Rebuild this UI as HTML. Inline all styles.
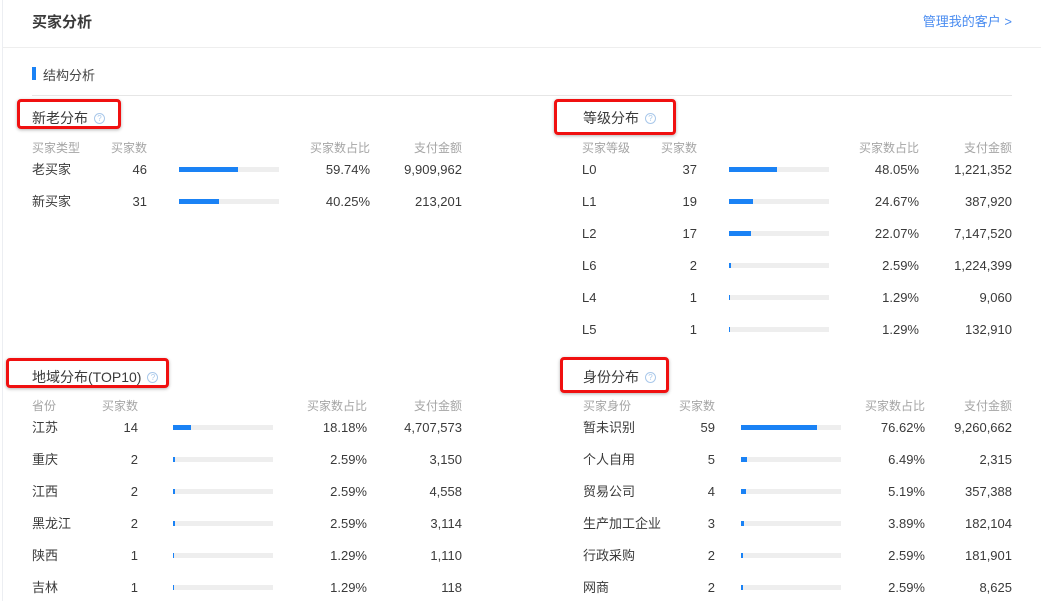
<!DOCTYPE html>
<html><head><meta charset="utf-8"><style>
body{margin:0;width:1041px;height:601px;overflow:hidden;background:#fff;font-family:"Liberation Sans","Noto Sans CJK SC",sans-serif;position:relative;color:#3a3a3a}
.a{position:absolute;white-space:nowrap;line-height:20px;height:20px;font-size:13px;transform:translateY(1px)}
.h{color:#a5a5a5;font-size:12px}
.bar{position:absolute;height:5px;width:100px;background:#eee}
.bar i{display:block;height:5px;background:#1a82f5}
.red{position:absolute;border:3px solid #f01010;border-radius:4px;box-shadow:0 1px 3px rgba(0,0,0,.3)}
.q{display:inline-block;width:9px;height:9px;border:1px solid #a9c8ea;border-radius:50%;color:#a9c8ea;font-size:8px;line-height:9px;text-align:center;vertical-align:2px;margin-left:6px}
</style></head><body>
<div style="position:absolute;left:2px;top:0;width:1px;height:601px;background:#eceef2"></div>
<div class="a" style="left:32px;top:12px;font-size:15px;font-weight:bold">买家分析</div>
<div class="a" style="right:29px;top:11px;color:#4a8cf0;font-size:13px">管理我的客户 &gt;</div>
<div style="position:absolute;left:3px;right:0;top:47px;height:1px;background:#eee"></div>
<div style="position:absolute;left:32px;top:67px;width:4px;height:13px;background:#1a82f5"></div>
<div class="a" style="left:43px;top:65px;color:#444">结构分析</div>
<div style="position:absolute;left:32px;width:980px;top:95px;height:1px;background:#e6e6e6"></div>

<div class="red" style="left:17px;top:99px;width:98px;height:24px"></div>
<div class="a" style="left:32px;top:107px;font-size:14px">新老分布<span class="q">?</span></div>
<div class="red" style="left:554px;top:99px;width:116px;height:30px"></div>
<div class="a" style="left:583px;top:107px;font-size:14px">等级分布<span class="q">?</span></div>
<div class="red" style="left:6px;top:358px;width:157px;height:24px"></div>
<div class="a" style="left:32px;top:366px;font-size:14px">地域分布(TOP10)<span class="q">?</span></div>
<div class="red" style="left:560px;top:357px;width:103px;height:30px"></div>
<div class="a" style="left:583px;top:366px;font-size:14px">身份分布<span class="q">?</span></div>

<!-- top-left -->
<div class="a h" style="left:32px;top:137px">买家类型</div><div class="a h" style="right:894px;top:137px">买家数</div><div class="a h" style="right:671px;top:137px">买家数占比</div><div class="a h" style="right:579px;top:137px">支付金额</div>
<div class="a" style="left:32px;top:159px">老买家</div><div class="a" style="right:894px;top:159px">46</div><div class="bar" style="left:179px;top:167px"><i style="width:59px"></i></div><div class="a" style="right:671px;top:159px">59.74%</div><div class="a" style="right:579px;top:159px">9,909,962</div>
<div class="a" style="left:32px;top:191px">新买家</div><div class="a" style="right:894px;top:191px">31</div><div class="bar" style="left:179px;top:199px"><i style="width:40px"></i></div><div class="a" style="right:671px;top:191px">40.25%</div><div class="a" style="right:579px;top:191px">213,201</div>

<!-- top-right -->
<div class="a h" style="left:582px;top:137px">买家等级</div><div class="a h" style="right:344px;top:137px">买家数</div><div class="a h" style="right:122px;top:137px">买家数占比</div><div class="a h" style="right:29px;top:137px">支付金额</div>
<div class="a" style="left:582px;top:159px">L0</div><div class="a" style="right:344px;top:159px">37</div><div class="bar" style="left:729px;top:167px"><i style="width:48px"></i></div><div class="a" style="right:122px;top:159px">48.05%</div><div class="a" style="right:29px;top:159px">1,221,352</div>
<div class="a" style="left:582px;top:191px">L1</div><div class="a" style="right:344px;top:191px">19</div><div class="bar" style="left:729px;top:199px"><i style="width:24px"></i></div><div class="a" style="right:122px;top:191px">24.67%</div><div class="a" style="right:29px;top:191px">387,920</div>
<div class="a" style="left:582px;top:223px">L2</div><div class="a" style="right:344px;top:223px">17</div><div class="bar" style="left:729px;top:231px"><i style="width:22px"></i></div><div class="a" style="right:122px;top:223px">22.07%</div><div class="a" style="right:29px;top:223px">7,147,520</div>
<div class="a" style="left:582px;top:255px">L6</div><div class="a" style="right:344px;top:255px">2</div><div class="bar" style="left:729px;top:263px"><i style="width:2px"></i></div><div class="a" style="right:122px;top:255px">2.59%</div><div class="a" style="right:29px;top:255px">1,224,399</div>
<div class="a" style="left:582px;top:287px">L4</div><div class="a" style="right:344px;top:287px">1</div><div class="bar" style="left:729px;top:295px"><i style="width:1px"></i></div><div class="a" style="right:122px;top:287px">1.29%</div><div class="a" style="right:29px;top:287px">9,060</div>
<div class="a" style="left:582px;top:319px">L5</div><div class="a" style="right:344px;top:319px">1</div><div class="bar" style="left:729px;top:327px"><i style="width:1px"></i></div><div class="a" style="right:122px;top:319px">1.29%</div><div class="a" style="right:29px;top:319px">132,910</div>

<!-- bottom-left -->
<div class="a h" style="left:32px;top:395px">省份</div><div class="a h" style="right:903px;top:395px">买家数</div><div class="a h" style="right:674px;top:395px">买家数占比</div><div class="a h" style="right:579px;top:395px">支付金额</div>
<div class="a" style="left:32px;top:417px">江苏</div><div class="a" style="right:903px;top:417px">14</div><div class="bar" style="left:173px;top:425px"><i style="width:18px"></i></div><div class="a" style="right:674px;top:417px">18.18%</div><div class="a" style="right:579px;top:417px">4,707,573</div>
<div class="a" style="left:32px;top:449px">重庆</div><div class="a" style="right:903px;top:449px">2</div><div class="bar" style="left:173px;top:457px"><i style="width:2px"></i></div><div class="a" style="right:674px;top:449px">2.59%</div><div class="a" style="right:579px;top:449px">3,150</div>
<div class="a" style="left:32px;top:481px">江西</div><div class="a" style="right:903px;top:481px">2</div><div class="bar" style="left:173px;top:489px"><i style="width:2px"></i></div><div class="a" style="right:674px;top:481px">2.59%</div><div class="a" style="right:579px;top:481px">4,558</div>
<div class="a" style="left:32px;top:513px">黑龙江</div><div class="a" style="right:903px;top:513px">2</div><div class="bar" style="left:173px;top:521px"><i style="width:2px"></i></div><div class="a" style="right:674px;top:513px">2.59%</div><div class="a" style="right:579px;top:513px">3,114</div>
<div class="a" style="left:32px;top:545px">陕西</div><div class="a" style="right:903px;top:545px">1</div><div class="bar" style="left:173px;top:553px"><i style="width:1px"></i></div><div class="a" style="right:674px;top:545px">1.29%</div><div class="a" style="right:579px;top:545px">1,110</div>
<div class="a" style="left:32px;top:577px">吉林</div><div class="a" style="right:903px;top:577px">1</div><div class="bar" style="left:173px;top:585px"><i style="width:1px"></i></div><div class="a" style="right:674px;top:577px">1.29%</div><div class="a" style="right:579px;top:577px">118</div>

<!-- bottom-right -->
<div class="a h" style="left:583px;top:395px">买家身份</div><div class="a h" style="right:326px;top:395px">买家数</div><div class="a h" style="right:116px;top:395px">买家数占比</div><div class="a h" style="right:29px;top:395px">支付金额</div>
<div class="a" style="left:583px;top:417px">暂未识别</div><div class="a" style="right:326px;top:417px">59</div><div class="bar" style="left:741px;top:425px"><i style="width:76px"></i></div><div class="a" style="right:116px;top:417px">76.62%</div><div class="a" style="right:29px;top:417px">9,260,662</div>
<div class="a" style="left:583px;top:449px">个人自用</div><div class="a" style="right:326px;top:449px">5</div><div class="bar" style="left:741px;top:457px"><i style="width:6px"></i></div><div class="a" style="right:116px;top:449px">6.49%</div><div class="a" style="right:29px;top:449px">2,315</div>
<div class="a" style="left:583px;top:481px">贸易公司</div><div class="a" style="right:326px;top:481px">4</div><div class="bar" style="left:741px;top:489px"><i style="width:5px"></i></div><div class="a" style="right:116px;top:481px">5.19%</div><div class="a" style="right:29px;top:481px">357,388</div>
<div class="a" style="left:583px;top:513px">生产加工企业</div><div class="a" style="right:326px;top:513px">3</div><div class="bar" style="left:741px;top:521px"><i style="width:3px"></i></div><div class="a" style="right:116px;top:513px">3.89%</div><div class="a" style="right:29px;top:513px">182,104</div>
<div class="a" style="left:583px;top:545px">行政采购</div><div class="a" style="right:326px;top:545px">2</div><div class="bar" style="left:741px;top:553px"><i style="width:2px"></i></div><div class="a" style="right:116px;top:545px">2.59%</div><div class="a" style="right:29px;top:545px">181,901</div>
<div class="a" style="left:583px;top:577px">网商</div><div class="a" style="right:326px;top:577px">2</div><div class="bar" style="left:741px;top:585px"><i style="width:2px"></i></div><div class="a" style="right:116px;top:577px">2.59%</div><div class="a" style="right:29px;top:577px">8,625</div>
</body></html>
